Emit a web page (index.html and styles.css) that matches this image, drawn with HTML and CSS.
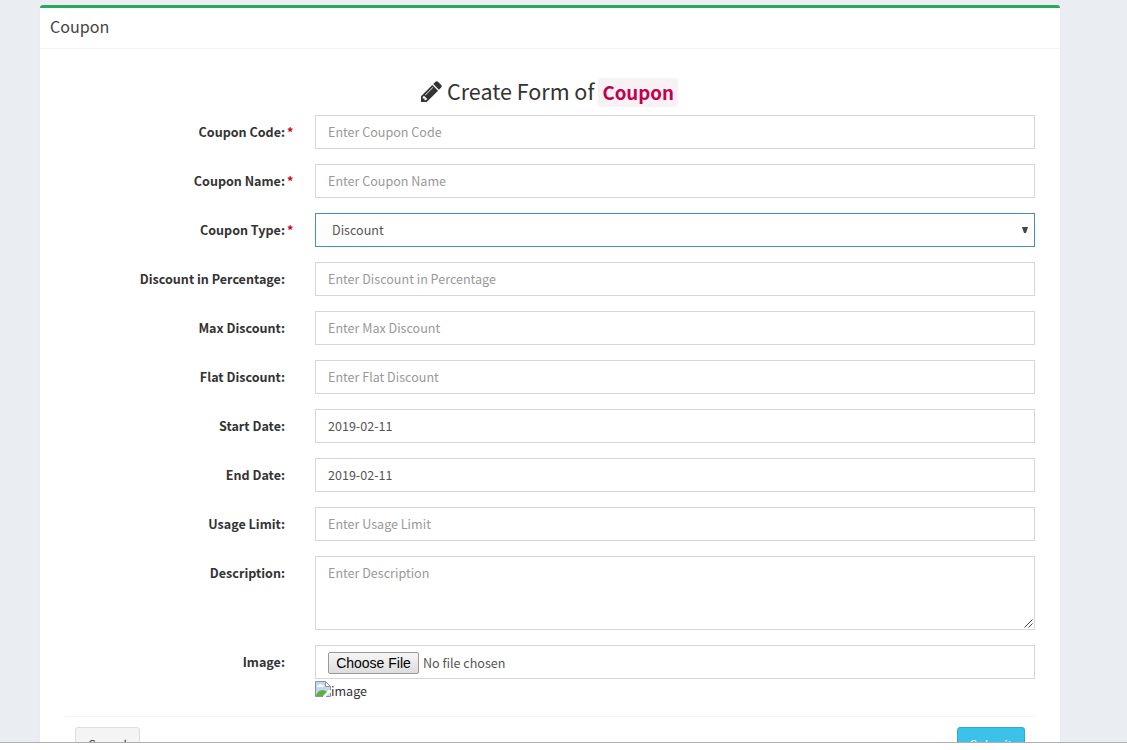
FILE: index.html
```html
<!DOCTYPE html>
<html lang="en">
<head>
<meta charset="utf-8">
<title>Coupon</title>
<link rel="stylesheet" href="styles.css">
</head>
<body>
<div class="viewport">
  <section class="box">
    <header class="box-header"><h3 class="box-title">Coupon</h3></header>
    <form class="form">
      <h2 class="form-title">
        <svg class="pencil" viewBox="0 128 1536 1536"><path d="M363 1536l91-91-235-235-91 91v107h128v128h107zm523-928q0-22-22-22-10 0-17 7l-542 542q-7 7-7 17 0 22 22 22 10 0 17-7l542-542q7-7 7-17zm-54-192l416 416-832 832h-416v-416zm683 96q0 53-37 90l-166 166-416-416 166-165q36-38 90-38 53 0 91 38l235 234q37 39 37 91z"/></svg>
        <span class="form-name">Create Form of</span>
        <span class="code">Coupon</span>
      </h2>
      <div class="row"><label class="label">Coupon Code:<span class="req">*</span></label><input class="control" placeholder="Enter Coupon Code"></div>
      <div class="row"><label class="label">Coupon Name:<span class="req">*</span></label><input class="control" placeholder="Enter Coupon Name"></div>
      <div class="row"><label class="label">Coupon Type:<span class="req">*</span></label><div class="control select focused"><span>Discount</span><svg class="caret" viewBox="0 0 6 6"><path d="M0 0h6L4 6H2z"/></svg></div></div>
      <div class="row"><label class="label">Discount in Percentage:</label><input class="control" placeholder="Enter Discount in Percentage"></div>
      <div class="row"><label class="label">Max Discount:</label><input class="control" placeholder="Enter Max Discount"></div>
      <div class="row"><label class="label">Flat Discount:</label><input class="control" placeholder="Enter Flat Discount"></div>
      <div class="row"><label class="label">Start Date:</label><input class="control" value="2019-02-11"></div>
      <div class="row"><label class="label">End Date:</label><input class="control" value="2019-02-11"></div>
      <div class="row"><label class="label">Usage Limit:</label><input class="control" placeholder="Enter Usage Limit"></div>
      <div class="row"><label class="label">Description:</label><div class="area-wrap"><textarea class="control area" placeholder="Enter Description"></textarea><svg class="grip" viewBox="0 0 9 9"><path d="M.5 8.5l8-8M4.5 8.5l4-4"/></svg></div></div>
      <div class="row image-row"><label class="label">Image:</label><div class="upload">
        <div class="control file"><button type="button" class="choose">Choose File</button><span>No file chosen</span></div>
        <div class="preview"><svg class="broken" viewBox="0 0 16 16"><path fill="#c3d6f2" d="M.5.5h10l5 5v10H.5z"/><path fill="#fff" d="M2 6q0-2 2-2 1-2 3 0 2 0 2 2z"/><path fill="#5cb040" d="M1 15q1-5 6-6 3 0 5 2l-3 4z"/><path fill="#fff" d="M16 6v5l-6 5H7l8-8z"/><path fill="#fff" d="M10.500.5v5h5z"/><path fill="none" stroke="#8c9299" d="M15.500 9V5.500l-5-5H.5v15H8M10.500.5v5h5M11 15.500h4.500V12"/></svg><span>image</span></div>
      </div></div>
      <footer class="footer"><button type="button" class="btn">Cancel</button><button type="button" class="btn primary">Submit</button></footer>
    </form>
  </section>
</div>
</body>
</html>
```
FILE: styles.css
```css
* { box-sizing: border-box; }
body { margin: 0; background: #fff; color: #333; font: 12.55px/20px "Noto Sans CJK SC", sans-serif; }
.viewport { height: 743px; padding: 5px 67px 0 40px; overflow: hidden; background: #eaedf2; border-bottom: 1px solid #b1aeb1; }
.box { height: 800px; background: #fff; border-top: 3px solid #28a75e; border-radius: 3px; box-shadow: 0 1px 1px rgba(0,0,0,.1); }
.box-header { height: 41px; padding: 9px 10px; border-bottom: 1px solid #f4f4f4; }
.box-title { margin: 0; font-size: 16.1px; font-weight: 400; line-height: 18px; color: #444; }
.form { padding: 25px 25px 0; }
.form-title { display: flex; align-items: center; justify-content: center; height: 36px; margin: 0 0 5px; padding-right: 1px; font-size: 21.5px; font-weight: 400; line-height: 30px; }
.pencil { width: 21px; height: 21px; margin: -2px 5px 0 0; fill: #333; }
.form-name { padding-bottom: 2px; }
.code { height: 29px; margin-left: 4px; padding: 0 4px; border-radius: 4px; background: #f9f2f4; color: #c3004c; font-size: 18.700px; font-weight: 700; line-height: 28px; }
.row { display: flex; align-items: flex-start; margin-bottom: 15px; }
.label { position: relative; width: 220px; margin-right: 30px; padding-top: 7px; font-weight: 700; text-align: right; }
.req { position: absolute; left: 222px; color: #d0021b; }
.control { display: block; width: 720px; height: 34px; padding: 6px 12px; border: 1px solid #d2d6de; border-radius: 0; background: #fff; color: #555; font: inherit; outline: 0; }
input.control { padding: 5px 12px 7px; }
.control::placeholder { color: #999; opacity: 1; }
.select { display: flex; align-items: center; justify-content: space-between; padding: 0 6px 0 16px; }
.focused { border-color: #4590b8; }
.caret { width: 6px; height: 6px; fill: #444; }
.area-wrap { position: relative; }
.area { height: 74px; resize: none; }
.grip { position: absolute; right: 2px; bottom: 2px; width: 9px; height: 9px; fill: none; stroke: #444; }
.image-row { margin-bottom: 14px; }
.file { display: flex; align-items: center; padding-top: 7px; }
.choose { width: 91px; height: 22px; margin-right: 4px; padding: 0; border: 1px solid #999; border-radius: 2px; background: linear-gradient(#f6f6f6, #ddd); color: #000; font: 14px/18px "Liberation Sans", sans-serif; }
.preview { display: flex; height: 23px; padding-top: 2px; }
.broken { width: 16px; height: 16px; }
.footer { display: flex; justify-content: space-between; padding: 10px; border-top: 1px solid #f4f4f4; }
.btn { width: 65px; height: 34px; padding: 1px 0 0; border: 1px solid #ddd; border-radius: 3px; background: #f4f4f4; color: #444; font: inherit; }
.primary { width: 68px; border-color: #31a9cf; background: #3cc1eb; color: #fff; }
```
